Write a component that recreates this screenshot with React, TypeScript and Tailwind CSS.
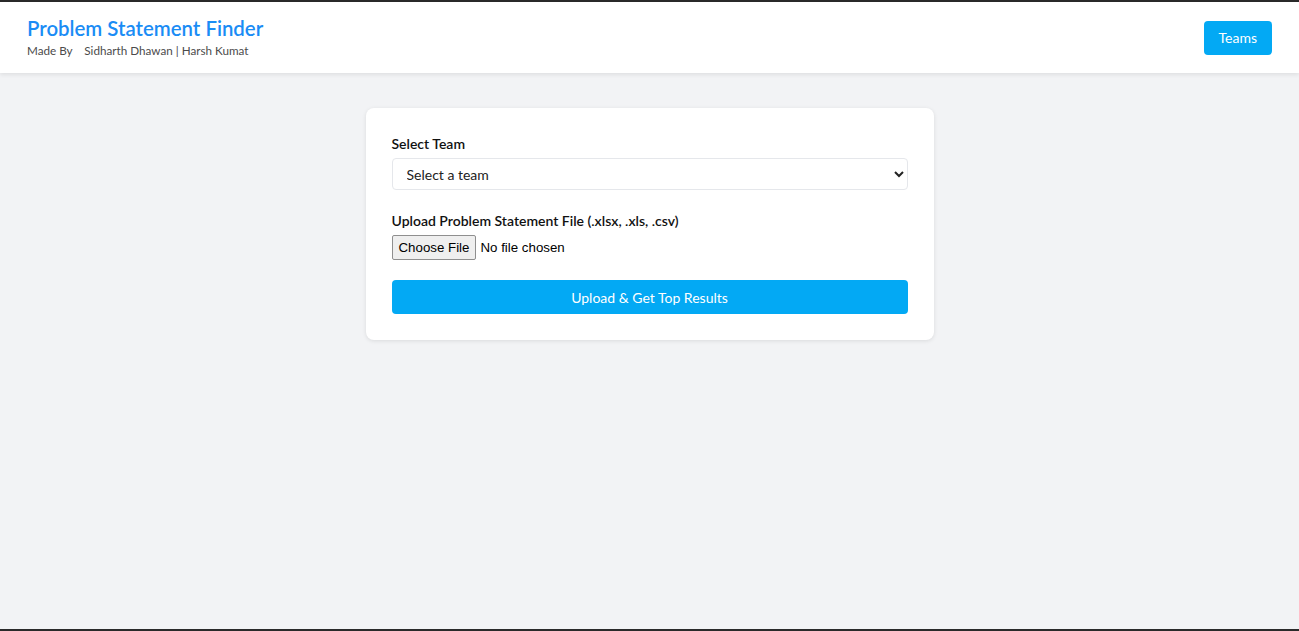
import React, { useState } from "react";

const teams = ["Team Alpha", "Team Beta", "Team Gamma"];

function Header() {
  return (
    <header className="flex h-[71px] items-center justify-between bg-white px-[27px] shadow-[0_2px_4px_rgba(0,0,0,0.08)]">
      <div className="-mt-[3px] flex flex-col">
        <h1 className="text-[20.4px] font-semibold leading-[26px] text-[#1a8cf5]">
          Problem Statement Finder
        </h1>
        <p className="mt-[1px] text-[11.7px] leading-4 text-[#4b4b4b]">
          Made By&nbsp;&nbsp;&nbsp; Sidharth Dhawan | Harsh Kumat
        </p>
      </div>
      <button className="h-[34px] rounded-[4px] bg-[#03a9f4] px-[15px] text-[14px] text-white">
        Teams
      </button>
    </header>
  );
}

function UploadCard() {
  const [team, setTeam] = useState("");

  return (
    <div className="w-[568px] rounded-lg bg-white px-[26px] pt-[26px] pb-[26px] shadow-[0_1px_4px_rgba(0,0,0,0.1)]">
      <label className="block text-[14px] font-semibold leading-5 text-[#111]">
        Select Team
      </label>
      <select
        value={team}
        onChange={(e) => setTeam(e.target.value)}
        className="mt-[4px] h-[32px] w-full rounded-[4px] border border-[#e5e7eb] bg-white px-[10px] text-[14px] text-[#222] outline-none"
      >
        <option value="">Select a team</option>
        {teams.map((t) => (
          <option key={t} value={t}>
            {t}
          </option>
        ))}
      </select>

      <label className="mt-[21px] block text-[14px] font-semibold leading-5 text-[#111]">
        Upload Problem Statement File (.xlsx, .xls, .csv)
      </label>
      <input
        type="file"
        accept=".xlsx,.xls,.csv"
        className="mt-[4px] block h-[25px] text-[13.3px] text-black [font-family:'Liberation_Sans',Arial,sans-serif] file:mr-[4px] file:h-[25px] file:rounded-[2px] file:border file:border-solid file:border-[#8f8f8f] file:bg-[#efefef] file:px-[6px] file:text-[13.3px] file:text-black"
      />

      <button className="mt-[20px] h-[34px] w-full rounded-[4px] bg-[#03a9f4] text-[14px] text-white">
        Upload &amp; Get Top Results
      </button>
    </div>
  );
}

export default function App() {
  return (
    <div className="flex h-[631px] flex-col border-t-2 border-b-2 border-[#2a2a2a] bg-[#f2f3f5] [font-family:Lato,'Noto_Sans',sans-serif]">
      <Header />
      <main className="flex justify-center pt-[35px]">
        <UploadCard />
      </main>
    </div>
  );
}
